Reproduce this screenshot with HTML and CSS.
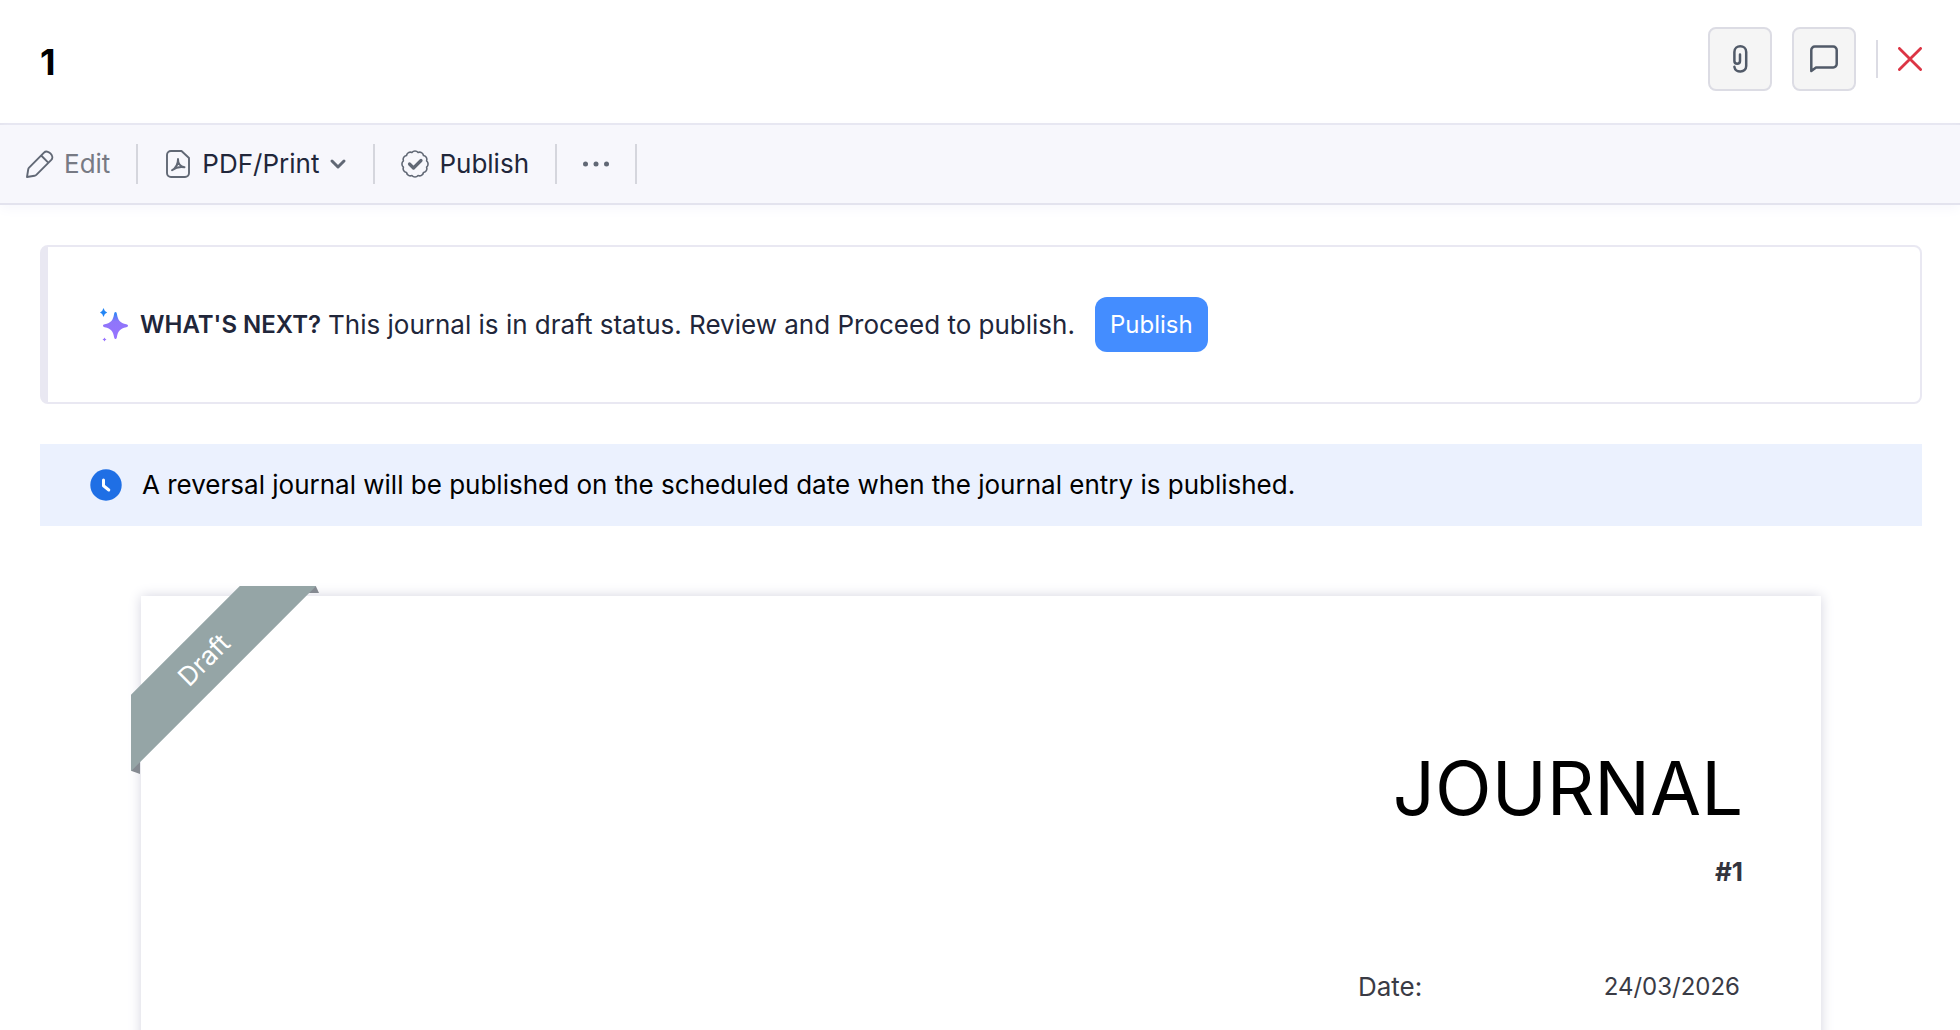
FILE: index.html
```html
<!DOCTYPE html>
<html lang="en">
<head>
<meta charset="utf-8">
<meta name="viewport" content="width=device-width, initial-scale=1">
<title>Journal 1</title>
<link rel="stylesheet" href="styles.css">
</head>
<body>
<header class="header">
  <h1 class="header-title">1</h1>
  <div class="header-actions">
    <button class="icon-button" type="button" aria-label="Attachments">
      <svg width="28" height="28" viewBox="0 0 28 28" fill="none" stroke="#515a68" stroke-width="2.500" stroke-linecap="round"><path d="M14 9.500v6.500c0 3.500-5.600 3.500-5.600 0V7c0-7.600 11.800-7.600 11.800 0v14c0 7-11 7.300-11.800 0.800"/></svg>
    </button>
    <button class="icon-button" type="button" aria-label="Comments">
      <svg width="28" height="28" viewBox="0 0 28 28" fill="none" stroke="#515a68" stroke-width="2.500" stroke-linejoin="round"><path d="M1.300 26V5a3.500 3.500 0 0 1 3.500-3.500h18.400A3.500 3.500 0 0 1 26.700 5v14a3.500 3.500 0 0 1-3.500 3.500H6z"/></svg>
    </button>
    <span class="header-divider"></span>
    <button class="close-button" type="button" aria-label="Close">
      <svg width="24" height="24" viewBox="0 0 24 24" fill="none" stroke="#dc3545" stroke-width="2.800" stroke-linecap="round"><path d="M1.400 1.400l21.200 21.200M22.600 1.400L1.400 22.600"/></svg>
    </button>
  </div>
</header>

<nav class="toolbar" aria-label="Journal actions">
  <button class="tool tool-muted" type="button">
    <svg width="28" height="28" viewBox="0 0 28 28" fill="none" stroke="#616875" stroke-width="1.900" stroke-linejoin="round"><path d="M1 27l1.200-7.500c.1-.7.400-1.300.9-1.800L18 2.600c3.700-3.700 11 3.400 7.300 7.300L10.300 24.900c-.5.500-1.100.8-1.800.9zM15.200 5.500l7.300 7.300"/></svg>
    <span>Edit</span>
  </button>
  <button class="tool" type="button">
    <svg width="28" height="28" viewBox="-2 0 28 28" fill="none" stroke="#616875" stroke-width="1.900" stroke-linejoin="round" stroke-linecap="round"><path d="M5 1h10.500L23 8v15a4 4 0 0 1-4 4H5a4 4 0 0 1-4-4V5a4 4 0 0 1 4-4z"/><path d="M6 20.300c3.500-2.200 6-6.300 6-11.300 0 4.500 2.500 7.600 6.500 8.300-4.400-.9-8.200-.2-12.500 3zM12 11c-.2 3.500-1.300 5.500-2.600 6.700"/></svg>
    <span>PDF/Print</span>
    <svg width="18" height="12" viewBox="0 0 18 12" fill="none" stroke="#616875" stroke-width="3" stroke-linecap="round" stroke-linejoin="round"><path d="M3 3l6 6 6-6"/></svg>
  </button>
  <button class="tool" type="button">
    <svg width="28" height="28" viewBox="0 0 28 28" fill="none" stroke="#616875" stroke-width="1.600" stroke-linejoin="round" stroke-linecap="round"><path d="M10.900 2.400A4 4 0 0 1 17.100 2.400A4 4 0 0 1 22.500 5.500A4 4 0 0 1 25.600 10.900A4 4 0 0 1 25.600 17.100A4 4 0 0 1 22.500 22.500A4 4 0 0 1 17.100 25.600A4 4 0 0 1 10.900 25.600A4 4 0 0 1 5.500 22.500A4 4 0 0 1 2.400 17.100A4 4 0 0 1 2.400 10.900A4 4 0 0 1 5.500 5.500A4 4 0 0 1 10.900 2.400z"/><path d="M8.500 14l4 4 7.500-7.500" stroke-width="3.200"/></svg>
    <span>Publish</span>
  </button>
  <button class="tool" type="button" aria-label="More actions">
    <svg width="26" height="28" viewBox="0 0 26 28" fill="#616875"><circle cx="2.500" cy="14" r="2.500"/><circle cx="13" cy="14" r="2.500"/><circle cx="23.500" cy="14" r="2.500"/></svg>
  </button>
</nav>

<main class="content">
  <section class="next-card">
    <svg width="28" height="36" viewBox="0 0 28 36"><defs><linearGradient id="spark" x1="0" y1="0" x2="0" y2="1"><stop offset="0" stop-color="#2386f5"/><stop offset=".35" stop-color="#8f76fa"/><stop offset="1" stop-color="#9873ff"/></linearGradient></defs><path fill="url(#spark)" d="M15.500 5c.8 0 1.200.8 1.400 2 1.100 6.500 3 8.600 9.400 10.300 2.300.6 2.300 2.300 0 2.900-6.400 1.600-8.300 3.500-9.400 10-.3 2.400-2.500 2.400-2.800 0-1.100-6.500-3-8.400-9.400-10-2.300-.6-2.300-2.300 0-2.900 6.400-1.700 8.300-3.800 9.400-10.300.2-1.200.6-2 1.400-2z"/><path fill="#2386f5" d="M3.500 1q.9 3.600 3.700 4.500-2.800.9-3.700 4.500-.9-3.600-3.500-4.500 2.600-.9 3.500-4.500z"/><path fill="#9873ff" d="M4.500 30.500q.4 1.700 2 2-1.600.3-2 2-.4-1.700-2-2 1.600-.3 2-2z"/></svg>
    <strong class="next-label">WHAT'S NEXT?</strong>
    <span class="next-text">This journal is in draft status. Review and Proceed to publish.</span>
    <button class="publish-button" type="button">Publish</button>
  </section>

  <p class="notice">
    <svg width="32" height="32" viewBox="0 0 32 32"><circle cx="16" cy="16" r="15.700" fill="#1f6fe5"/><path d="M13.500 11v5.800l5.300 4.200" fill="none" stroke="#fff" stroke-width="3" stroke-linecap="round" stroke-linejoin="round"/></svg>
    <span>A reversal journal will be published on the scheduled date when the journal entry is published.</span>
  </p>

  <article class="paper">
    <div class="ribbon">
      <span class="fold fold-top"></span>
      <span class="fold fold-side"></span>
      <span class="ribbon-band">Draft</span>
    </div>
    <h2 class="paper-title">JOURNAL</h2>
    <p class="paper-number">#1</p>
    <dl class="details">
      <dt>Date:</dt>
      <dd>24/03/2026</dd>
    </dl>
  </article>
</main>
</body>
</html>
```
FILE: styles.css
```css
* { box-sizing: border-box; }

html { overflow: hidden; }

body {
  margin: 0;
  height: 100vh;
  overflow: hidden;
  background: #fff;
  color: #21263a;
  font-family: Inter, "Liberation Sans", sans-serif;
  font-size: 26px;
  line-height: 32px;
}

button {
  margin: 0;
  font: inherit;
  color: inherit;
  cursor: pointer;
}

svg { display: block; flex: none; }

/* Header */
.header {
  display: flex;
  justify-content: space-between;
  align-items: flex-start;
  padding: 27px 38px 32px 40px;
  border-bottom: 2px solid #e3e3ee;
}

.header-title {
  margin: 13px 0 0;
  color: #000;
  font-size: 36px;
  line-height: 44px;
  font-weight: 700;
}

.header-actions {
  display: flex;
  align-items: center;
  gap: 20px;
}

.icon-button {
  display: flex;
  align-items: center;
  justify-content: center;
  width: 64px;
  height: 64px;
  padding: 0;
  border: 2px solid #dcdce4;
  border-radius: 8px;
  background: #f5f5f5;
}

.header-divider {
  width: 2px;
  height: 38px;
  background: #dcdce4;
}

.close-button {
  padding: 0;
  border: 0;
  background: none;
}

/* Toolbar */
.toolbar {
  display: flex;
  align-items: center;
  height: 80px;
  padding-left: 5px;
  background: #f7f7fc;
  border-bottom: 2px solid #e3e3ee;
  box-shadow: 0 4px 12px #f7f7fc;
}

.tool {
  display: flex;
  align-items: center;
  gap: 10px;
  height: 40px;
  padding: 0 26px;
  border: 0;
  border-right: 2px solid #d5d6dd;
  background: none;
}

.tool-muted {
  padding-left: 21px;
  color: #777a84;
}

/* Content */
.content { padding: 40px 38px 0 40px; }

.next-card {
  display: flex;
  align-items: center;
  height: 159px;
  padding-left: 52px;
  border: 2px solid #e9e8f2;
  border-left-width: 8px;
  border-radius: 8px;
}

.next-label {
  margin-left: 12px;
  font-size: 24px;
  font-weight: 600;
}

.next-text { margin-left: 7px; }

.publish-button {
  height: 55px;
  margin-left: 20px;
  padding: 0 15px;
  border: 0;
  border-radius: 12px;
  background: #448dff;
  color: #fff;
  font-size: 24px;
}

.notice {
  display: flex;
  align-items: center;
  gap: 20px;
  height: 82px;
  margin: 40px 0 0;
  padding-left: 50px;
  background: #ebf1fe;
  color: #000;
}

.paper {
  position: relative;
  min-height: 600px;
  margin: 70px 101px 0;
  padding: 146px 78px 80px;
  box-shadow: 0 0 12px #d4d4e0;
}

.ribbon {
  position: absolute;
  top: -10px;
  left: -10px;
  width: 188px;
  height: 188px;
  overflow: hidden;
}

.ribbon-band {
  position: absolute;
  top: 47px;
  left: -77px;
  width: 300px;
  height: 54px;
  background: #95a5a6;
  color: #fff;
  line-height: 54px;
  text-align: center;
  transform: rotate(-45deg);
}

.fold {
  position: absolute;
  background: #858a91;
}

.fold-top {
  top: 0;
  right: 0;
  width: 16px;
  height: 7px;
  clip-path: polygon(0 0, 80% 0, 100% 100%, 0 100%);
}

.fold-side {
  bottom: 0;
  left: 0;
  width: 9px;
  height: 16px;
  clip-path: polygon(0 0, 100% 0, 100% 100%, 0 80%);
}

.paper-title {
  margin: 0;
  color: #000;
  font-size: 74px;
  line-height: 92px;
  font-weight: 400;
  text-align: right;
}

.paper-number {
  margin: 22px 0 0;
  color: #33343e;
  font-weight: 700;
  text-align: right;
}

.details {
  display: flex;
  justify-content: space-between;
  align-items: center;
  width: 385px;
  margin: 83px 0 0 auto;
  padding-right: 3px;
  color: #3a3b45;
}

.details dd {
  margin: 0;
  font-size: 24px;
}
```
